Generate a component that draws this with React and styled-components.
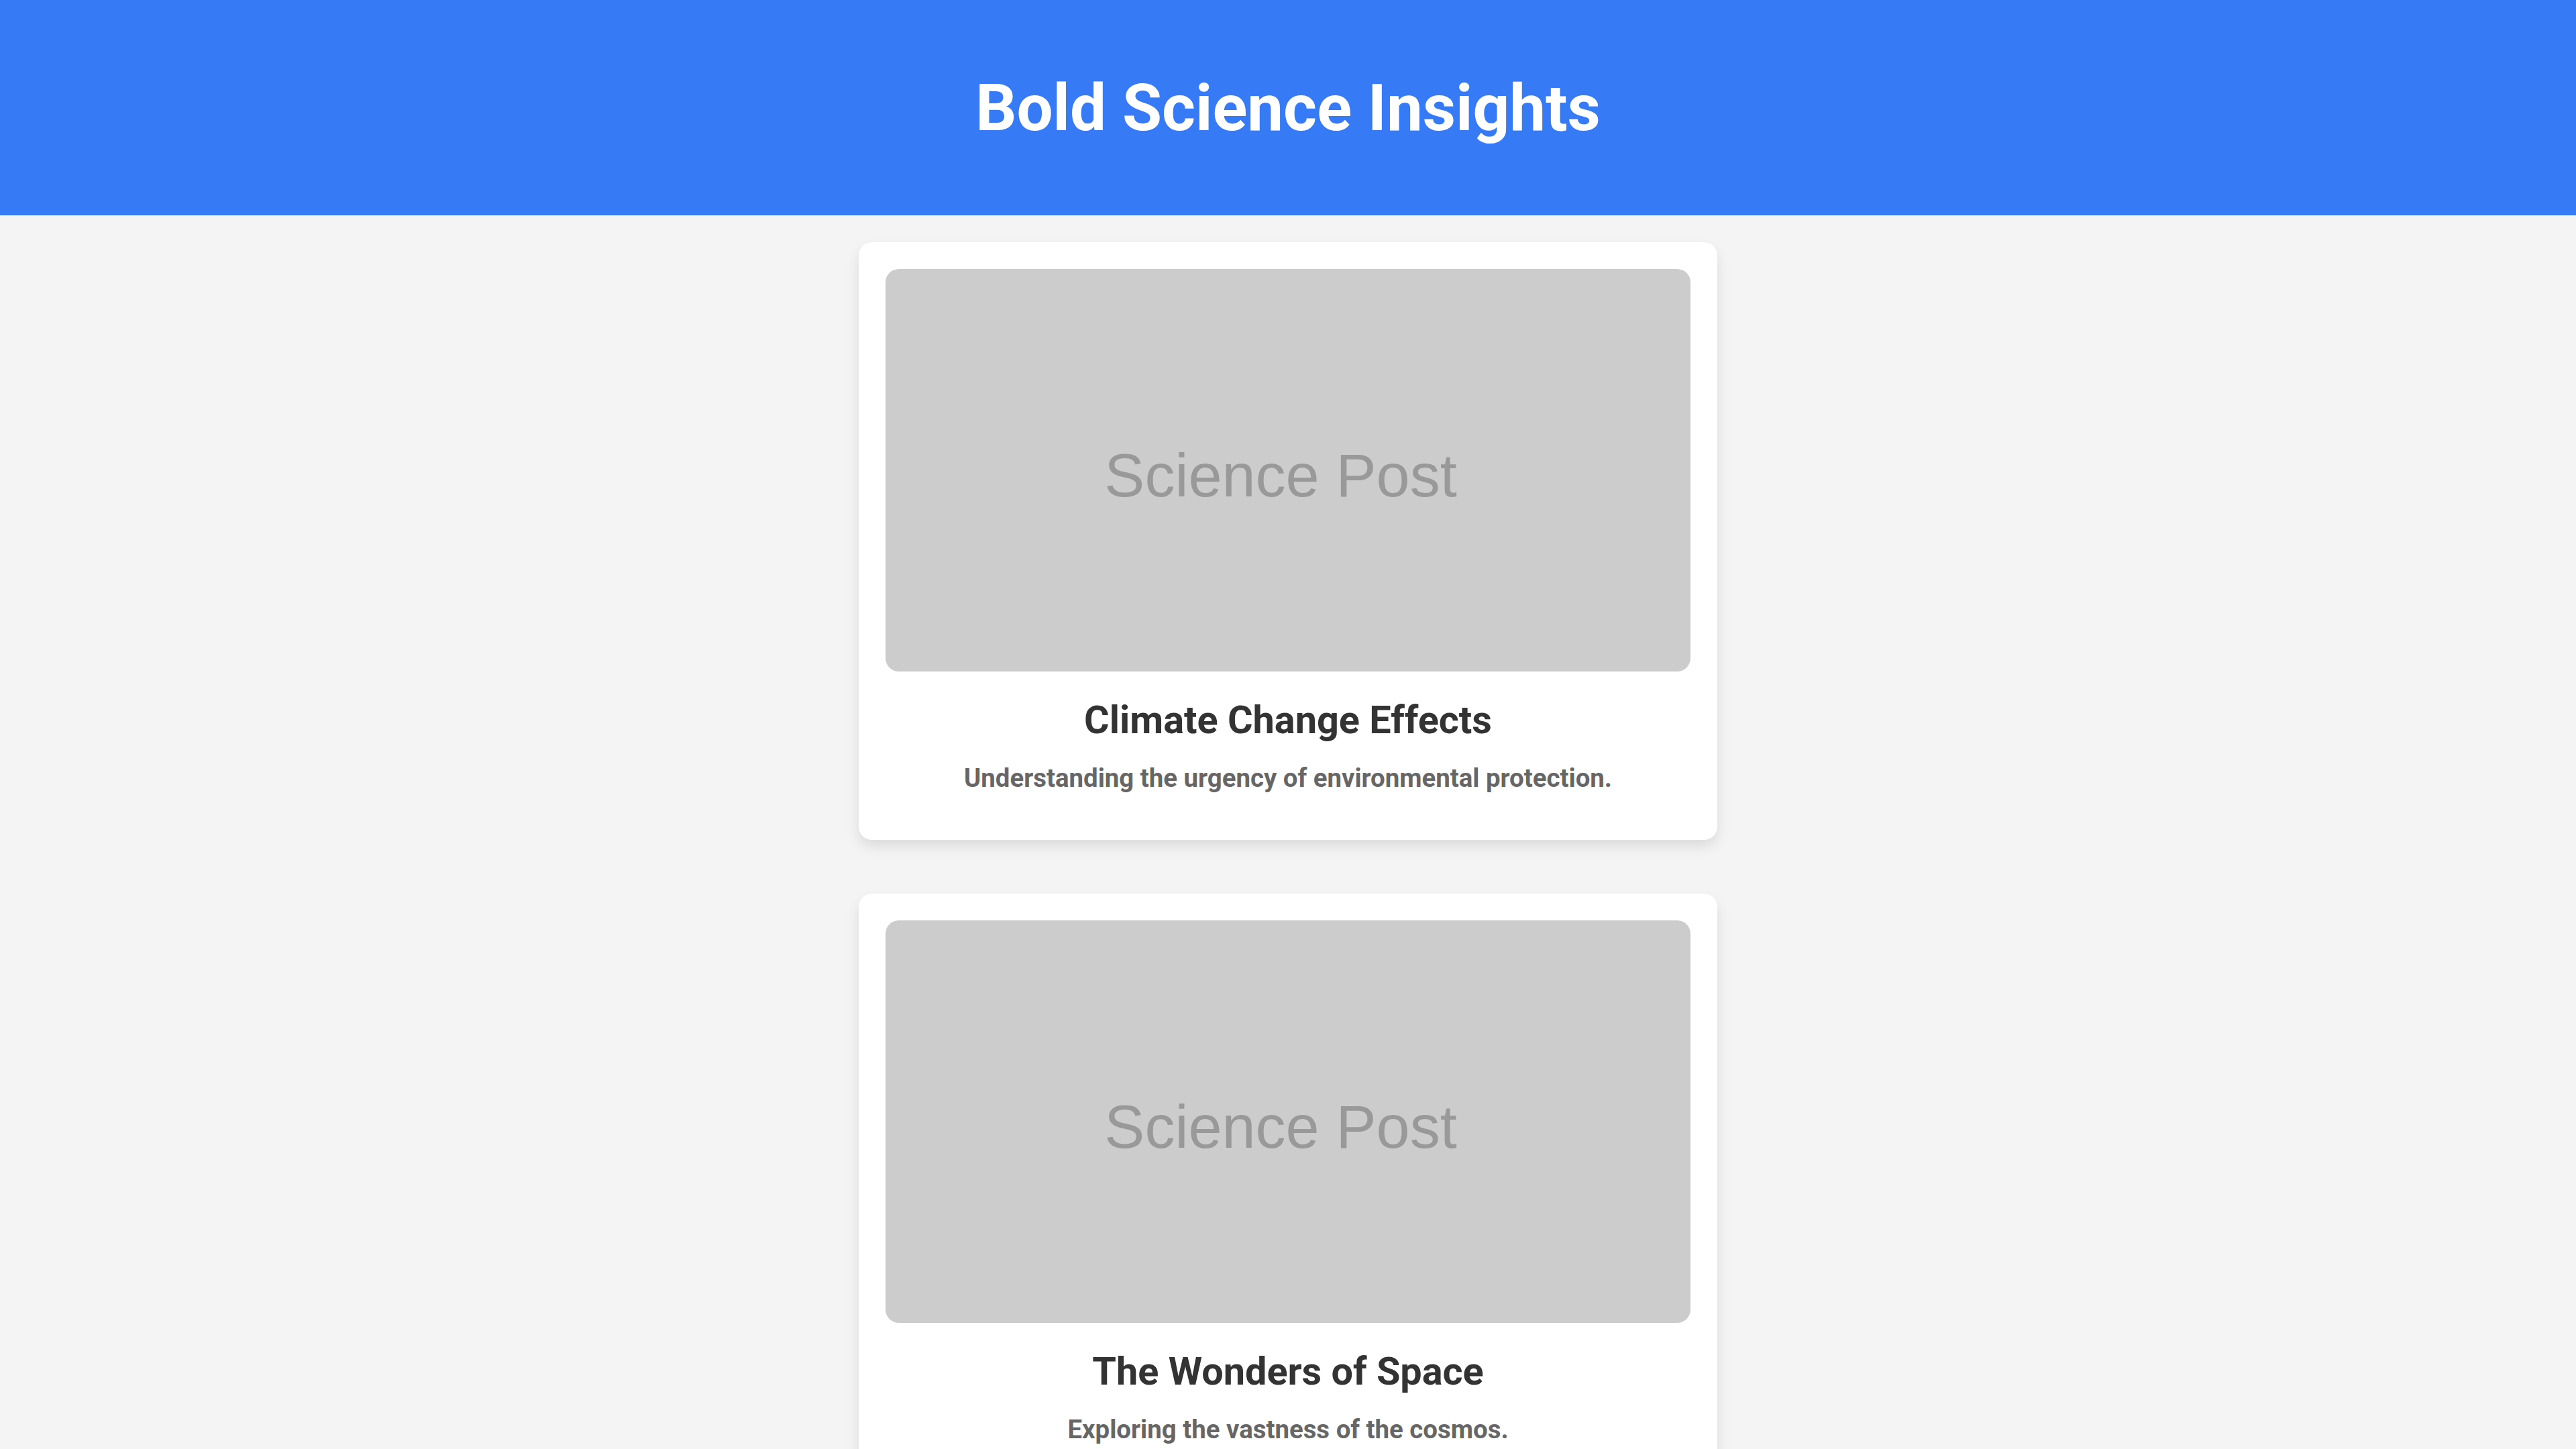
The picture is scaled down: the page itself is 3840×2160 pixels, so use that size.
import styled, { createGlobalStyle } from "styled-components";

const GlobalStyle = createGlobalStyle`
  html, body {
    margin: 0;
    padding: 0;
    background: #f4f4f4;
    font-family: Roboto, "Liberation Sans", Arial, sans-serif;
  }
`;

const posts = [
  {
    id: 1,
    title: "Climate Change Effects",
    text: "Understanding the urgency of environmental protection.",
  },
  {
    id: 2,
    title: "The Wonders of Space",
    text: "Exploring the vastness of the cosmos.",
  },
];

const Header = styled.header`
  height: 321px;
  background: #377af6;
  display: flex;
  align-items: center;
  justify-content: center;
`;

const Title = styled.h1`
  margin: 0;
  color: #ffffff;
  font-size: 96px;
  font-weight: 700;
  line-height: 1;
`;

const Feed = styled.main`
  display: flex;
  flex-direction: column;
  align-items: center;
  gap: 80px;
  padding: 40px 0 80px;
`;

const Card = styled.article`
  width: 1280px;
  box-sizing: border-box;
  padding: 40px;
  background: #ffffff;
  border-radius: 20px;
  box-shadow: 0 10px 20px rgba(0, 0, 0, 0.1);
  text-align: center;
`;

const Placeholder = styled.div`
  height: 600px;
  background: #cccccc;
  border-radius: 20px;
  display: flex;
  align-items: center;
  justify-content: center;
  padding: 16px 22px 0 0;
  box-sizing: border-box;
  color: #999999;
  font-family: "Liberation Sans", Arial, sans-serif;
  font-size: 90px;
`;

const PostTitle = styled.h2`
  margin: 39px 0 0;
  color: #333333;
  font-size: 57.6px;
  font-weight: 700;
  line-height: normal;
`;

const PostText = styled.p`
  margin: 30px 0 30px;
  color: #666666;
  font-size: 38.4px;
  font-weight: 700;
  line-height: normal;
`;

export default function App() {
  return (
    <>
      <GlobalStyle />
      <Header>
        <Title>Bold Science Insights</Title>
      </Header>
      <Feed>
        {posts.map((post) => (
          <Card key={post.id}>
            <Placeholder>Science Post</Placeholder>
            <PostTitle>{post.title}</PostTitle>
            <PostText>{post.text}</PostText>
          </Card>
        ))}
      </Feed>
    </>
  );
}
